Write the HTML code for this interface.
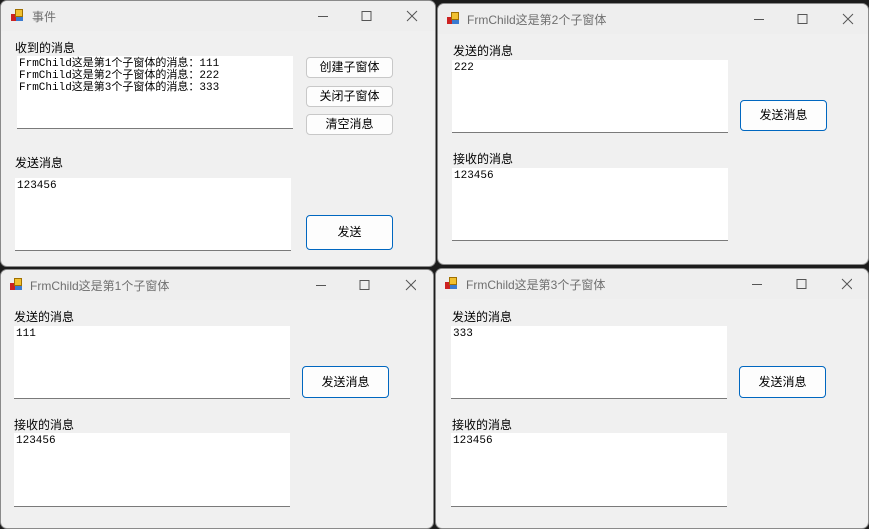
<!DOCTYPE html><html><head><meta charset="utf-8"><style>
*{margin:0;padding:0;box-sizing:border-box}
body{width:869px;height:527px;background:#1c1c1c;position:relative;overflow:hidden;font-family:"Liberation Sans","Noto Sans CJK SC",sans-serif;font-size:12px;color:#000}
.w{position:absolute;background:#f0f0f0;border-radius:7px;overflow:hidden;border:1px solid #8a8a8a}
.t{position:absolute;left:0;right:0;top:0;height:30px;background:#eeeeee}
.tt{position:absolute;top:7px;font-size:12px;color:#6f6f6f}
.ic{position:absolute;top:8px;width:13px;height:13px}
.ic i{position:absolute;display:block}
.ctl{position:absolute;top:9px}
.a{position:absolute}
.tb{position:absolute;background:#fff;border-bottom:1px solid #7a7a7a;font-family:"Liberation Mono","Noto Sans CJK SC",monospace;font-size:11px;line-height:12px;padding:2px 2px}
.b{position:absolute;background:#fdfdfd;border:1px solid #c8c8c8;border-radius:4px;text-align:center;font-size:12px}
.bb{border:1px solid #0067c0}
</style></head><body>
<!-- W1 -->
<div class="w" style="left:0;top:0;width:436px;height:267px">
<div class="t"></div>
<div class="ic" style="left:10px"><i style="left:0;top:5px;width:5px;height:7px;background:#c22"></i><i style="left:4px;top:0;width:8px;height:8px;background:#f0c030;border:1px solid #a07000"></i><i style="left:5px;top:8px;width:7px;height:4px;background:#3a7ad0"></i></div>
<div class="tt" style="left:31px">事件</div>
<svg class="ctl" style="left:317px" width="100" height="12"><path d="M0 6.5H10M44 1.5h9v9h-9zM89 1l10 10M99 1l-10 10" stroke="#555" fill="none" stroke-width="1"/></svg>
<div class="a" style="left:14px;top:38px">收到的消息</div>
<div class="tb" style="left:16px;top:55px;width:276px;height:73px">FrmChild这是第1个子窗体的消息：111<br>FrmChild这是第2个子窗体的消息：222<br>FrmChild这是第3个子窗体的消息：333</div>
<div class="b" style="left:305px;top:56px;width:87px;height:21px;line-height:19px">创建子窗体</div>
<div class="b" style="left:305px;top:85px;width:87px;height:21px;line-height:19px">关闭子窗体</div>
<div class="b" style="left:305px;top:113px;width:87px;height:21px;line-height:19px">清空消息</div>
<div class="a" style="left:14px;top:153px">发送消息</div>
<div class="tb" style="left:14px;top:177px;width:276px;height:73px">123456</div>
<div class="b bb" style="left:305px;top:214px;width:87px;height:35px;line-height:33px">发送</div>
</div>
<!-- W2 -->
<div class="w" style="left:437px;top:3px;width:432px;height:262px">
<div class="t"></div>
<div class="ic" style="left:9px"><i style="left:0;top:5px;width:5px;height:7px;background:#c22"></i><i style="left:4px;top:0;width:8px;height:8px;background:#f0c030;border:1px solid #a07000"></i><i style="left:5px;top:8px;width:7px;height:4px;background:#3a7ad0"></i></div>
<div class="tt" style="left:29px">FrmChild这是第2个子窗体</div>
<svg class="ctl" style="left:316px" width="100" height="12"><path d="M0 6.5H10M44 1.5h9v9h-9zM89 1l10 10M99 1l-10 10" stroke="#555" fill="none" stroke-width="1"/></svg>
<div class="a" style="left:15px;top:38px">发送的消息</div>
<div class="tb" style="left:14px;top:56px;width:276px;height:73px">222</div>
<div class="b bb" style="left:302px;top:96px;width:87px;height:31px;line-height:29px">发送消息</div>
<div class="a" style="left:15px;top:146px">接收的消息</div>
<div class="tb" style="left:14px;top:164px;width:276px;height:73px">123456</div>
</div>
<!-- W3 -->
<div class="w" style="left:0;top:269px;width:434px;height:260px">
<div class="t"></div>
<div class="ic" style="left:9px"><i style="left:0;top:5px;width:5px;height:7px;background:#c22"></i><i style="left:4px;top:0;width:8px;height:8px;background:#f0c030;border:1px solid #a07000"></i><i style="left:5px;top:8px;width:7px;height:4px;background:#3a7ad0"></i></div>
<div class="tt" style="left:29px">FrmChild这是第1个子窗体</div>
<svg class="ctl" style="left:315px" width="100" height="12"><path d="M0 6.5H10M44 1.5h9v9h-9zM90 1l10 10M100 1l-10 10" stroke="#555" fill="none" stroke-width="1"/></svg>
<div class="a" style="left:13px;top:38px">发送的消息</div>
<div class="tb" style="left:13px;top:56px;width:276px;height:73px">111</div>
<div class="b bb" style="left:301px;top:96px;width:87px;height:32px;line-height:30px">发送消息</div>
<div class="a" style="left:13px;top:146px">接收的消息</div>
<div class="tb" style="left:13px;top:163px;width:276px;height:74px">123456</div>
</div>
<!-- W4 -->
<div class="w" style="left:435px;top:268px;width:434px;height:261px">
<div class="t"></div>
<div class="ic" style="left:9px"><i style="left:0;top:5px;width:5px;height:7px;background:#c22"></i><i style="left:4px;top:0;width:8px;height:8px;background:#f0c030;border:1px solid #a07000"></i><i style="left:5px;top:8px;width:7px;height:4px;background:#3a7ad0"></i></div>
<div class="tt" style="left:30px">FrmChild这是第3个子窗体</div>
<svg class="ctl" style="left:316px" width="100" height="12"><path d="M0 6.5H10M45 1.5h9v9h-9zM90 1l10 10M100 1l-10 10" stroke="#555" fill="none" stroke-width="1"/></svg>
<div class="a" style="left:16px;top:39px">发送的消息</div>
<div class="tb" style="left:15px;top:57px;width:276px;height:73px">333</div>
<div class="b bb" style="left:303px;top:97px;width:87px;height:32px;line-height:30px">发送消息</div>
<div class="a" style="left:16px;top:147px">接收的消息</div>
<div class="tb" style="left:15px;top:164px;width:276px;height:74px">123456</div>
</div>
</body></html>
